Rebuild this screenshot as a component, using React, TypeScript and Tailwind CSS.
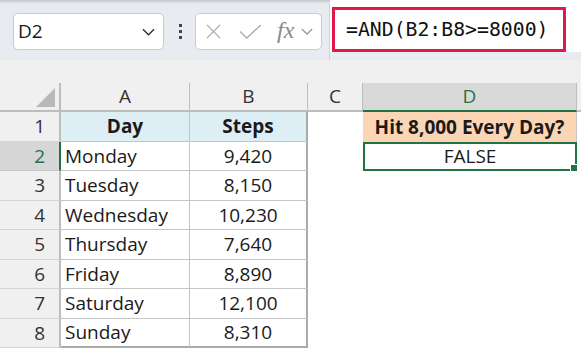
import React from 'react';

const rows = [
  { n: 2, day: 'Monday', steps: '9,420' },
  { n: 3, day: 'Tuesday', steps: '8,150' },
  { n: 4, day: 'Wednesday', steps: '10,230' },
  { n: 5, day: 'Thursday', steps: '7,640' },
  { n: 6, day: 'Friday', steps: '8,890' },
  { n: 7, day: 'Saturday', steps: '12,100' },
  { n: 8, day: 'Sunday', steps: '8,310' },
];

const Chevron: React.FC<{ className?: string }> = ({ className }) => (
  <svg viewBox="0 0 14 8" className={className} fill="none" stroke="currentColor" strokeWidth="1.6">
    <polyline points="1,1 7,7 13,1" />
  </svg>
);

const App: React.FC = () => {
  return (
    <div className="w-[581px] h-[350px] overflow-hidden bg-white font-['Open_Sans',sans-serif] text-[#1a1a1a]">
      {/* formula toolbar */}
      <div className="relative h-[60px] bg-[#e8ebef] flex items-start">
        <div className="absolute inset-x-0 top-0 h-[4px] bg-gradient-to-b from-[#c4c8cd] to-[#e8ebef]" />
        <div className="mt-[13px] ml-[13px] w-[151px] h-[37px] bg-white border border-[#c9cbcf] rounded-[5px] flex items-center pl-[4px] pr-[8px]">
          <span className="text-[19px] flex-1">D2</span>
          <Chevron className="w-[13px] h-[8px] text-[#333]" />
        </div>
        <div className="mt-[24px] ml-[15px] flex flex-col gap-[3px]">
          <div className="w-[3px] h-[3px] bg-[#444]" />
          <div className="w-[3px] h-[3px] bg-[#444]" />
          <div className="w-[3px] h-[3px] bg-[#444]" />
        </div>
        <div className="mt-[13px] ml-[13px] w-[127px] h-[37px] bg-white border border-[#c9cbcf] rounded-[5px] flex items-center pl-[10px]">
          <svg viewBox="0 0 16 16" className="w-[15px] h-[15px] text-[#a6a6a6]" fill="none" stroke="currentColor" strokeWidth="1.3">
            <line x1="1" y1="1" x2="15" y2="15" />
            <line x1="15" y1="1" x2="1" y2="15" />
          </svg>
          <svg viewBox="0 0 24 16" className="ml-[18px] w-[23px] h-[15px] text-[#a6a6a6]" fill="none" stroke="currentColor" strokeWidth="1.3">
            <polyline points="1,8 8,15 23,1" />
          </svg>
          <span className="ml-[15px] font-['Liberation_Serif',serif] italic text-[24px] leading-none text-[#8a8a8a] -mt-[4px]">fx</span>
          <Chevron className="ml-[7px] w-[12px] h-[7px] text-[#9a9a9a]" />
        </div>
        <div className="ml-[7px] w-px h-[60px] bg-[#cfd2d6]" />
        <div className="flex-1 h-[52px] bg-white relative">
          <div className="absolute left-[2px] top-[7px] w-[234px] h-[45px] border-[3px] border-[#e0194c] flex items-center pl-[11px]">
            <span className="font-['DejaVu_Sans_Mono',monospace] text-[19.8px] text-[#111]">=AND(B2:B8&gt;=8000)</span>
          </div>
        </div>
      </div>
      <div className="h-[23px] bg-[#f0f0f0]" />

      {/* sheet */}
      <div className="grid grid-cols-[61px_129px_118px_55px_214px_1fr] text-[19px]">
        {/* column headers */}
        <div className="h-[29px] bg-[#f0f0f0] border-r-2 border-b-2 border-[#bdbdbd] flex items-end justify-end pr-[4px] pb-[3px]">
          <svg viewBox="0 0 20 20" className="w-[19px] h-[19px]">
            <polygon points="20,0 20,20 0,20" fill="#b8b8b8" />
          </svg>
        </div>
        <div className="h-[29px] bg-[#f0f0f0] border-r border-b-2 border-[#bdbdbd] flex items-center justify-center text-[#333]">A</div>
        <div className="h-[29px] bg-[#f0f0f0] border-r border-b-2 border-[#bdbdbd] flex items-center justify-center text-[#333]">B</div>
        <div className="h-[29px] bg-[#f0f0f0] border-r border-b-2 border-[#bdbdbd] flex items-center justify-center text-[#333]">C</div>
        <div className="h-[29px] bg-[#d9d9d9] border-r border-[#bdbdbd] border-b-2 border-b-[#217346] flex items-center justify-center text-[#217346]">D</div>
        <div className="h-[29px] bg-[#f0f0f0] border-b-2 border-[#bdbdbd]" />

        {/* row 1 */}
        <div className="h-[30px] bg-[#f0f0f0] border-r-2 border-b border-r-[#bdbdbd] border-b-[#d4d4d4] flex items-center justify-end pr-[14px] text-[#333]">1</div>
        <div className="h-[30px] bg-[#ddeef5] border-r border-b border-[#c4c4c4] flex items-center justify-center font-bold">Day</div>
        <div className="h-[30px] bg-[#ddeef5] border-r-2 border-b border-r-[#ababab] border-b-[#c4c4c4] flex items-center justify-center font-bold">Steps</div>
        <div className="h-[30px]" />
        <div className="h-[30px] bg-[#fcd5b5] border-r border-[#c4c4c4] flex items-center justify-center font-bold">Hit 8,000 Every Day?</div>
        <div className="h-[30px]" />

        {rows.map((r) => {
          const sel = r.n === 2;
          const h = r.n % 2 === 0 ? 'h-[29px]' : 'h-[30px]';
          const last = r.n === 8;
          return (
            <React.Fragment key={r.n}>
              <div
                className={
                  sel
                    ? `${h} bg-[#d6d6d6] border-r-2 border-b border-r-[#217346] border-b-[#c4c4c4] flex items-center justify-end pr-[14px] text-[#217346]`
                    : `${h} bg-[#f0f0f0] border-r-2 border-b border-r-[#bdbdbd] border-b-[#d4d4d4] flex items-center justify-end pr-[14px] text-[#333]`
                }
              >
                {r.n}
              </div>
              <div className={`${h} border-r ${last ? 'border-b-2 border-b-[#ababab]' : 'border-b border-b-[#c4c4c4]'} border-r-[#c4c4c4] flex items-center pl-[4px]`}>
                {r.day}
              </div>
              <div className={`${h} border-r-2 border-r-[#ababab] ${last ? 'border-b-2 border-b-[#ababab]' : 'border-b border-b-[#c4c4c4]'} flex items-center justify-center`}>
                {r.steps}
              </div>
              <div className={h} />
              {sel ? (
                <div className={`${h} relative border-2 border-[#217346] flex items-center justify-center`}>
                  FALSE
                  <div className="absolute -right-[3px] -bottom-[3px] w-[6px] h-[6px] bg-[#217346] border border-white box-content" />
                </div>
              ) : (
                <div className={h} />
              )}
              <div className={h} />
            </React.Fragment>
          );
        })}
      </div>
    </div>
  );
};

export default App;
